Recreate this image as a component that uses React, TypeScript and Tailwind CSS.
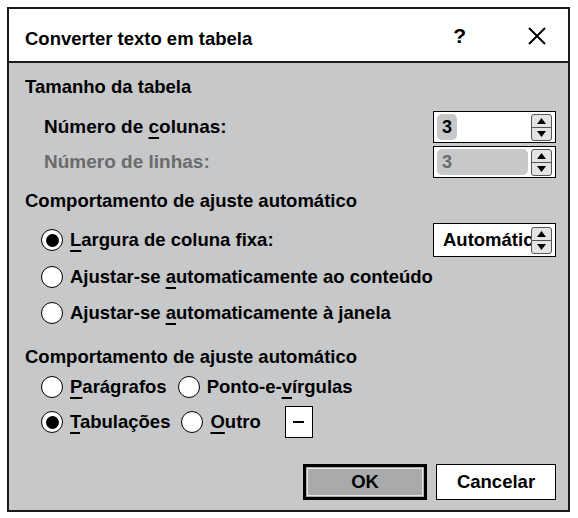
import React from "react";

function Radio({ checked }: { checked?: boolean }) {
    return (
        <span className="flex h-[22px] w-[22px] shrink-0 items-center justify-center rounded-full border-[1.5px] border-black bg-white">
            {checked && <span className="h-[13px] w-[13px] rounded-full bg-black" />}
        </span>
    );
}

function Spinner() {
    return (
        <span className="flex h-[27px] w-[21px] shrink-0 flex-col overflow-hidden rounded-[3px] border border-[#555] bg-[#e4e4e4]">
            <span className="flex flex-1 items-center justify-center border-b border-[#555]">
                <svg width="9" height="6" viewBox="0 0 9 6"><polygon points="0,6 9,6 4.5,0" fill="#000" /></svg>
            </span>
            <span className="flex flex-1 items-center justify-center">
                <svg width="9" height="6" viewBox="0 0 9 6"><polygon points="0,0 9,0 4.5,6" fill="#000" /></svg>
            </span>
        </span>
    );
}

function U({ children }: { children: React.ReactNode }) {
    return <span className="underline decoration-[1.5px] underline-offset-[4px]">{children}</span>;
}

function RadioRow({ checked, children }: { checked?: boolean; children: React.ReactNode }) {
    return (
        <label className="flex items-center gap-[7px]">
            <Radio checked={checked} />
            <span>{children}</span>
        </label>
    );
}

export default function App() {
    return (
        <div className="h-[518px] w-[578px] bg-white pl-[7px] pt-[7px] font-['Liberation_Sans',Arial,sans-serif] font-bold text-black">
            <div className="flex h-[505px] w-[563px] flex-col border-2 border-[#1a1a1a] bg-[#c7c8ca]">
                {/* Title bar */}
                <div className="flex h-[54px] shrink-0 items-center border-b-2 border-[#1a1a1a] bg-white pl-[16px] pr-[22px]">
                    <span className="flex-1 pt-[8px] text-[18.5px]">Converter texto em tabela</span>
                    <span className="mr-[62px] pt-[2px] text-[21px]">?</span>
                    <svg width="18" height="18" viewBox="0 0 18 18" className="mt-[2px]">
                        <path d="M1 1 L17 17 M17 1 L1 17" stroke="#000" strokeWidth="2" />
                    </svg>
                </div>

                {/* Body */}
                <div className="flex flex-1 flex-col pl-[16px] pr-[12px] text-[18.5px]">
                    <div className="mt-[12px] h-[24px] leading-[24px]">Tamanho da tabela</div>

                    <div className="mt-[12px] flex h-[32px] items-center justify-between pl-[19px]">
                        <span className="text-[19px]">Número de <U>c</U>olunas:</span>
                        <div className="flex h-[32px] w-[123px] items-center justify-between border-[1.5px] border-black bg-white pl-[3px] pr-[3px]">
                            <span className="flex h-[26px] items-center rounded-[5px] bg-[#c7c8ca] px-[5px] text-[18px]">3</span>
                            <Spinner />
                        </div>
                    </div>

                    <div className="mt-[3px] flex h-[32px] items-center justify-between pl-[19px] text-[#6b6b6b]">
                        <span className="text-[19px]">Número de linhas:</span>
                        <div className="flex h-[32px] w-[123px] items-center gap-[3px] border-[1.5px] border-black bg-white pl-[3px] pr-[3px]">
                            <span className="flex h-[26px] flex-1 items-center rounded-[5px] bg-[#c7c8ca] px-[5px] text-[18px]">3</span>
                            <Spinner />
                        </div>
                    </div>

                    <div className="mt-[11px] h-[24px] leading-[24px]">Comportamento de ajuste automático</div>

                    <div className="mt-[10px] flex h-[34px] items-center justify-between pl-[16px]">
                        <RadioRow checked>
                            <U>L</U>argura de coluna fixa:
                        </RadioRow>
                        <div className="flex h-[34px] w-[123px] items-center border-[1.5px] border-black bg-white pl-[9px] pr-[3px]">
                            <span className="w-[88px] shrink-0 overflow-hidden whitespace-nowrap text-[18.5px] leading-[24px]">Automático</span>
                            <Spinner />
                        </div>
                    </div>

                    <div className="mt-[3px] flex h-[34px] items-center pl-[16px]">
                        <RadioRow>
                            Ajustar-se <U>a</U>utomaticamente ao conteúdo
                        </RadioRow>
                    </div>

                    <div className="mt-[2px] flex h-[34px] items-center pl-[16px]">
                        <RadioRow>
                            Ajustar-se <U>a</U>utomaticamente à janela
                        </RadioRow>
                    </div>

                    <div className="mt-[15px] h-[24px] leading-[24px]">Comportamento de ajuste automático</div>

                    <div className="mt-[3px] flex h-[30px] items-center gap-[11px] pl-[16px]">
                        <RadioRow>
                            <U>P</U>arágrafos
                        </RadioRow>
                        <RadioRow>
                            Ponto-e-<U>v</U>írgulas
                        </RadioRow>
                    </div>

                    <div className="mt-[4px] flex h-[32px] items-center gap-[11px] pl-[16px]">
                        <RadioRow checked>
                            <U>T</U>abulações
                        </RadioRow>
                        <RadioRow>
                            <U>O</U>utro
                        </RadioRow>
                        <div className="ml-[13px] flex h-[32px] w-[28px] items-center justify-center border-[1.5px] border-black bg-white">
                            <span className="h-[2px] w-[11px] bg-black" />
                        </div>
                    </div>

                    <div className="mt-[26px] flex justify-end gap-[9px]">
                        <button className="flex h-[36px] w-[124px] items-center justify-center border-[3px] border-black bg-[#a9aaac] outline outline-1 -outline-offset-[5px] outline-[#e8e8e8] text-[18.5px]">
                            OK
                        </button>
                        <button className="flex h-[36px] w-[120px] items-center justify-center border-[1.5px] border-black bg-white text-[18.5px]">
                            Cancelar
                        </button>
                    </div>
                </div>
            </div>
        </div>
    );
}
